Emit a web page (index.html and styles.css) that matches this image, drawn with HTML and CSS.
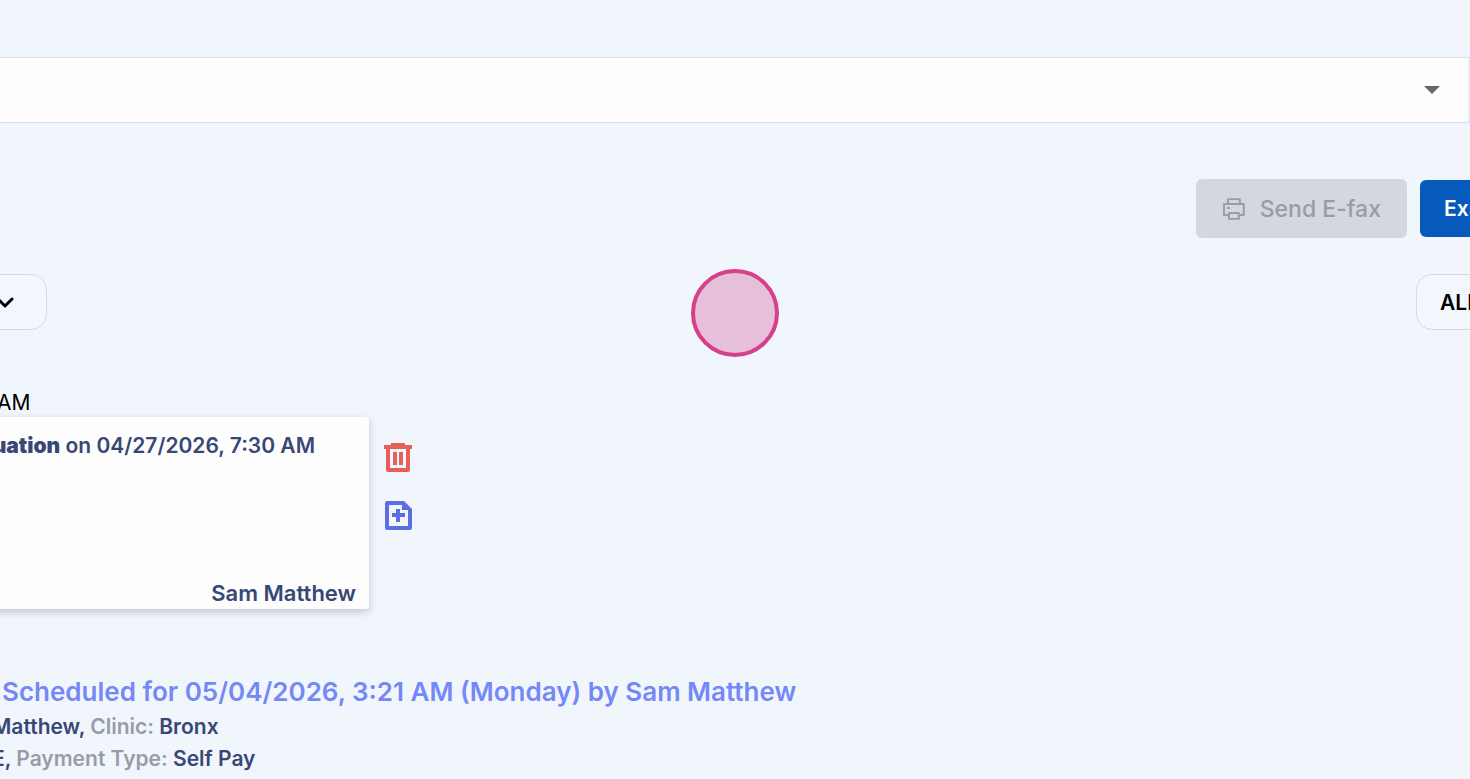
FILE: index.html
```
<!DOCTYPE html>
<html lang="en">
<head>
    <meta charset="UTF-8">
    <meta name="viewport" content="width=device-width, initial-scale=1.0">
    <title>Patient Notes</title>
    <link rel="stylesheet" href="styles.css">
</head>
<body>
    <div class="page">
        <!-- Case selector -->
        <select class="case-select" aria-label="Case">
            <option></option>
        </select>

        <!-- Actions -->
        <div class="toolbar">
            <button class="btn btn-fax" disabled>
                <svg width="24" height="24" viewBox="0 0 24 24" fill="none" stroke="currentColor" stroke-width="2" stroke-linejoin="round">
                    <path d="M6 7V2h12v5M6 18H2V7h20v11h-4"/>
                    <path d="M7 16h10v6H7z"/>
                    <path d="M5 11h3"/>
                </svg>
                Send E-fax
            </button>
            <button class="btn btn-export">Export</button>
        </div>

        <!-- Filters -->
        <div class="filters">
            <button class="filter filter-left" aria-label="Filter">
                <svg width="20" height="20" viewBox="0 0 20 20" fill="none" stroke="currentColor" stroke-width="3" stroke-linecap="round" stroke-linejoin="round">
                    <path d="M3 7l7 7 7-7"/>
                </svg>
            </button>
            <button class="filter filter-right">ALL</button>
        </div>

        <!-- Note -->
        <div class="note-time">AM</div>
        <div class="note">
            <div class="note-card">
                <div class="note-title"><b>uation</b>&nbsp;on 04/27/2026, 7:30 AM</div>
                <div class="note-author">Sam Matthew</div>
            </div>
            <div class="note-actions">
                <button class="icon-btn delete" aria-label="Delete note">
                    <svg width="30" height="30" viewBox="0 0 30 30" fill="currentColor">
                        <path d="M8 1h14v2h7v4h-2v21q0 2-2 2H5q-2 0-2-2V7H1V3h7zM7 7v19h16V7z" fill-rule="evenodd"/>
                        <path d="M10 10h4v13h-4zM16 10h4v13h-4z"/>
                    </svg>
                </button>
                <button class="icon-btn add" aria-label="Add note">
                    <svg width="30" height="30" viewBox="0 0 30 30" fill="currentColor">
                        <path d="M4 1h17l8 8v19q0 2-2 2H4q-2 0-2-2V3q0-2 2-2zM6 5v21h19V10h-6V5z" fill-rule="evenodd"/>
                        <path d="M13 9h4v4h5v4h-5v5h-4v-5H9v-4h4z"/>
                    </svg>
                </button>
            </div>
        </div>

        <!-- Next appointment -->
        <div class="visit">
            <h2>Scheduled for 05/04/2026, 3:21 AM (Monday) by Sam Matthew</h2>
            <p>Matthew, <span>Clinic:</span> Bronx</p>
            <p>E, <span>Payment Type:</span> Self Pay</p>
        </div>
    </div>

    <div class="click-marker"></div>
</body>
</html>
```
FILE: styles.css
```
* {
    box-sizing: border-box;
}
body {
    margin: 0;
    background-color: #f1f6fd;
    font-family: Inter, "Liberation Sans", sans-serif;
    font-size: 21px;
    color: #000;
    overflow: hidden;
}
button {
    font-family: inherit;
    font-size: 21px;
    font-weight: 600;
    cursor: pointer;
}
.page {
    padding-top: 57px;
}
.case-select {
    display: block;
    appearance: none;
    width: 100%;
    height: 66px;
    border: 1px solid #dcdfe8;
    border-left: none;
    border-right: 2px solid #e9ebf4;
    border-radius: 0;
    background-color: #fdfdfd;
    background-image: url("data:image/svg+xml,%3Csvg xmlns='http://www.w3.org/2000/svg' width='16' height='8'%3E%3Cpath d='M0 0h16L8 8z' fill='%23686868'/%3E%3C/svg%3E");
    background-repeat: no-repeat;
    background-position: right 28px center;
}
.toolbar {
    display: flex;
    justify-content: flex-end;
    align-items: center;
    gap: 13px;
    margin: 56px -70px 0 0;
}
.btn {
    display: flex;
    align-items: center;
    border: none;
    border-radius: 6px;
    white-space: nowrap;
}
.btn-fax {
    gap: 14px;
    width: 211px;
    height: 59px;
    padding: 0 26px;
    background-color: #d3d7de;
    color: #989da3;
    font-size: 23px;
    font-weight: 500;
}
.btn-export {
    width: 120px;
    height: 57px;
    padding: 0 24px;
    background-color: #055abc;
    color: #fff;
}
.filters {
    display: flex;
    justify-content: space-between;
    margin: 36px -70px 0;
}
.filter {
    display: flex;
    align-items: center;
    height: 56px;
    border: 1px solid #d5d9e0;
    border-radius: 16px;
    background-color: #f2f6fd;
    color: #000;
}
.filter-left {
    justify-content: flex-end;
    width: 117px;
    padding: 0 31px;
}
.filter-right {
    width: 124px;
    padding: 0 23px;
}
.note-time {
    margin-top: 58px;
    margin-left: -3px;
    line-height: 29px;
}
.note {
    display: flex;
    gap: 14px;
    margin-left: -20px;
}
.note-card {
    display: flex;
    flex-direction: column;
    justify-content: space-between;
    width: 389px;
    height: 192px;
    padding: 13px 13px 0 0;
    border-radius: 3px;
    background-color: #fdfdfd;
    box-shadow: 0 3px 8px rgba(0, 0, 0, 0.2);
    color: #384775;
    font-weight: 600;
    line-height: 31px;
    white-space: nowrap;
}
.note-title {
    display: flex;
    justify-content: flex-end;
    padding-right: 41px;
}
.note-author {
    font-size: 22px;
    text-align: right;
}
.note-actions {
    display: flex;
    flex-direction: column;
    gap: 28px;
    padding-top: 25px;
}
.icon-btn {
    padding: 0;
    border: none;
    background: none;
}
.icon-btn svg {
    display: block;
}
.delete {
    color: #e65f59;
}
.add {
    color: #5b6ee5;
}
.visit {
    margin-top: 64px;
    white-space: nowrap;
    color: #384775;
    font-weight: 600;
}
.visit h2 {
    margin: 0 0 0 2px;
    color: #7488f7;
    font-size: 26px;
    font-weight: 600;
    line-height: 38px;
}
.visit p {
    margin: 0 0 0 -8px;
    line-height: 32px;
}
.visit span {
    color: #989ca8;
}
.click-marker {
    position: absolute;
    top: 269px;
    left: 50%;
    width: 88px;
    height: 88px;
    margin-left: -44px;
    border: 4px solid #d73f8b;
    border-radius: 50%;
    background-color: #e6bfda;
}
```
